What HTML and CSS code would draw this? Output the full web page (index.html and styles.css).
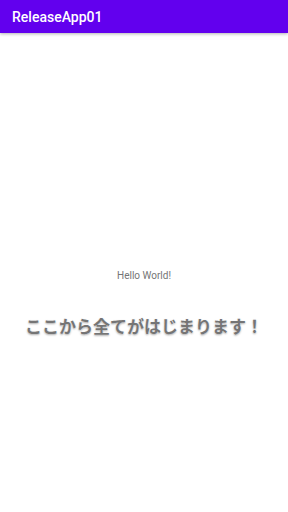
FILE: index.html
```html
<!DOCTYPE html>
<html>
<head>
    <meta charset="utf-8">
    <link rel="stylesheet" href="styles.css">
</head>
<body>
    <div class="toolbar">
        <h1 class="title">ReleaseApp01</h1>
    </div>
    <div class="content">
        <p class="hello">Hello World!</p>
        <p class="lead">ここから全てがはじまります！</p>
    </div>
</body>
</html>
```
FILE: styles.css
```css
body {
    font-family: "Roboto", "Noto Sans CJK JP", sans-serif;
    margin: 0;
    background-color: #FFF;
    height: 512px;
}

.toolbar {
    height: 33px;
    background-color: #6200EE;
    display: flex;
    align-items: center;
    padding: 0 12px;
    box-shadow: 0 1px 3px rgba(0, 0, 0, 0.3);
}

.title {
    margin: 0;
    color: #FFF;
    font-size: 14px;
    font-weight: 500;
}

.content {
    display: flex;
    flex-direction: column;
    align-items: center;
    padding-top: 237px;
}

.hello {
    margin: 0;
    font-size: 10px;
    color: #757575;
}

.lead {
    margin: 32px 0 0;
    font-family: "Noto Sans CJK JP", sans-serif;
    font-size: 17px;
    font-weight: 700;
    color: #757575;
    text-shadow: 0 0 1px #FFF, 0 1px 2px rgba(0, 0, 0, 0.35);
}
```
